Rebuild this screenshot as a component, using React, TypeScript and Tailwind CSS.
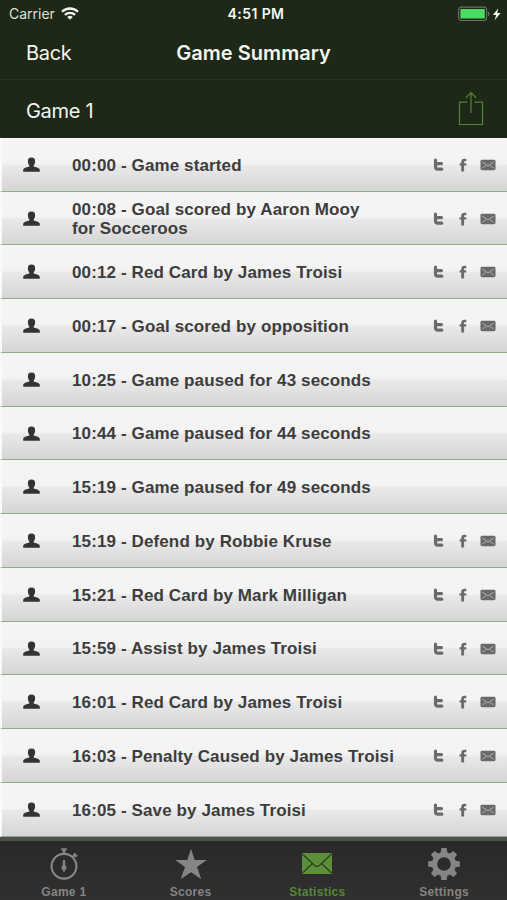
type GameEvent = {
  text: string;
  shareable?: boolean;
};

const events: GameEvent[] = [
  { text: '00:00 - Game started', shareable: true },
  { text: '00:08 - Goal scored by Aaron Mooy\nfor Socceroos', shareable: true },
  { text: '00:12 - Red Card by James Troisi', shareable: true },
  { text: '00:17 - Goal scored by opposition', shareable: true },
  { text: '10:25 - Game paused for 43 seconds' },
  { text: '10:44 - Game paused for 44 seconds' },
  { text: '15:19 - Game paused for 49 seconds' },
  { text: '15:19 - Defend by Robbie Kruse', shareable: true },
  { text: '15:21 - Red Card by Mark Milligan', shareable: true },
  { text: '15:59 - Assist by James Troisi', shareable: true },
  { text: '16:01 - Red Card by James Troisi', shareable: true },
  { text: '16:03 - Penalty Caused by James Troisi', shareable: true },
  { text: '16:05 - Save by James Troisi', shareable: true },
];

const WifiIcon = () => (
  <svg width="18" height="13" viewBox="0 0 18 13" fill="none" stroke="#f4f6f2" strokeWidth="2.3">
    <path d="M1 4.8a11.4 11.4 0 0 1 16 0" />
    <path d="M3.9 7.9a7.2 7.2 0 0 1 10.2 0" />
    <path d="M6.2 10a4 4 0 0 1 5.6 0L9 12.8Z" fill="#f4f6f2" stroke="none" />
  </svg>
);

const BatteryIcon = () => (
  <svg width="44" height="16" viewBox="0 0 44 16">
    <rect x="0.6" y="1.1" width="28" height="13.4" rx="3" fill="none" stroke="#687064" strokeWidth="1.2" />
    <rect x="2.4" y="3" width="24.4" height="9.6" rx="1" fill="#4cdb62" />
    <path d="M30 5.5c2 .8 2 3.9 0 4.7Z" fill="#687064" />
    <path d="M40.2 2.5 34.9 8.9h3.3L36.6 14.2l6-7.2h-3.4Z" fill="#f4f6f2" />
  </svg>
);

const ShareIcon = () => (
  <svg width="26" height="35" viewBox="0 0 26 35" fill="none" stroke="#55813b" strokeWidth="1.2">
    <path d="M9.5 11.1H1.5V33.5H24.5V11.1H16.5" />
    <path d="M13 22V2M7.8 7 13 1.7 18.2 7" />
  </svg>
);

const PersonIcon = () => (
  <svg width="18" height="16" viewBox="0 0 18 16" fill="#333">
    <path d="M8.5.6c2.6 0 3.7 1.4 3.6 3.6 0 1.9-.5 3.1-1.4 4.2v1.2c1.5 1 5.8.8 6.1 3.4v1.7H.2V13c.3-2.6 4.6-2.4 6.1-3.4V8.4C5.4 7.3 4.9 6.1 4.9 4.2 4.8 2 5.9.6 8.5.6Z" />
  </svg>
);

const TwitterIcon = () => (
  <svg width="11" height="14" viewBox="0 0 11 14" fill="none" stroke="#6b6b6b" strokeWidth="3.2" strokeLinecap="round" strokeLinejoin="round">
    <path d="M2.5 2.2v6.5q0 2.5 2.5 2.5h3.8M2.5 5.6h6" />
  </svg>
);

const FacebookIcon = () => (
  <svg width="8" height="14" viewBox="0 0 8 14" fill="#6b6b6b">
    <path d="M7.3.8V3.3H6C5.2 3.3 5.1 3.7 5.1 4.3v.9h2.2v2.3H5.1v6H2.2v-6H.6V5.2h1.6V4c0-2.1 1.2-3.3 3.3-3.3Z" />
  </svg>
);

const MailIcon = () => (
  <svg width="16" height="12" viewBox="0 0 16 12">
    <rect x=".5" y=".8" width="15" height="10.4" rx="1.4" fill="#696969" />
    <path d="m2.3 3 5.7 4L13.7 3M2.5 9.2l3.2-2.6M13.5 9.2l-3.2-2.6" fill="none" stroke="#b4b4b4" strokeWidth="1" />
  </svg>
);

const StopwatchIcon = () => (
  <svg width="30" height="34" viewBox="0 0 30 34" fill="none" stroke="#858585">
    <circle cx="15" cy="19.3" r="12.4" strokeWidth="2.2" />
    <path d="M15 2v5" strokeWidth="2.6" />
    <path d="M12.3 2.3h5.4" strokeWidth="2.2" />
    <path d="m23.3 10.5 3-3.2" strokeWidth="2" />
    <path d="M24.7 6.7 27.8 9.6" strokeWidth="2.6" />
    <path d="M13.9 13h2.2l.3 5.7c1.8 1.5 1.2 3.7-.4 4.2v1.5h-2v-1.5c-1.6-.5-2.2-2.7-.4-4.2Z" fill="#858585" stroke="none" />
  </svg>
);

const StarIcon = () => (
  <svg width="32" height="32" viewBox="0 0 32 32" fill="#858585">
    <path d="m16 .8 3.7 11.3h12L22 19.1l4.2 12L16 24.2 5.8 31.1 10 19.1.3 12.1h12Z" />
  </svg>
);

const StatisticsIcon = () => (
  <svg width="30" height="21" viewBox="0 0 30 21">
    <rect width="30" height="21" rx="1" fill="#5c9038" />
    <path d="m.5 1 11.8 11.2q2.7 2.4 5.4 0L29.5 1M.5 20 10.4 10.5M29.5 20 19.6 10.5" fill="none" stroke="#2b3e22" strokeWidth="1.2" />
  </svg>
);

const GearIcon = () => (
  <svg width="32" height="32" viewBox="-16 -16 32 32">
    <g fill="#858585">
      {[0, 45, 90, 135, 180, 225, 270, 315].map((angle) => (
        <path key={angle} d="M-3.6-10-2.6-15.9h5.2L3.6-10Z" transform={`rotate(${angle})`} />
      ))}
    </g>
    <circle r="9.4" fill="none" stroke="#858585" strokeWidth="5.2" />
  </svg>
);

const tabs = [
  { label: 'Game 1', icon: <StopwatchIcon /> },
  { label: 'Scores', icon: <StarIcon /> },
  { label: 'Statistics', icon: <StatisticsIcon />, active: true },
  { label: 'Settings', icon: <GearIcon /> },
];

const EventRow = ({ event }: { event: GameEvent }) => (
  <li className="flex h-[53.75px] items-center border-b border-l-2 border-b-[#93aa8e] border-l-[#fafafa] bg-[linear-gradient(#f5f5f5_0%,#f3f3f3_48%,#e9e9e9_52%,#d5d5d5_100%)] pt-px pr-[11px] pl-[21px]">
    <div className="w-[49px] shrink-0">
      <PersonIcon />
    </div>
    <p className="shrink-0 pt-px text-[17px] leading-[19.5px] font-bold tracking-[0.12px] whitespace-pre-line text-[#3d3d3d]">
      {event.text}
    </p>
    {event.shareable && (
      <div className="ml-auto flex items-center">
        <TwitterIcon />
        <span className="mr-[13px] ml-[15px]">
          <FacebookIcon />
        </span>
        <MailIcon />
      </div>
    )}
  </li>
);

const App = () => {
  return (
    <div className="flex h-[900px] w-[507px] flex-col overflow-hidden bg-[#1d2817] font-['Liberation_Sans',Arial,sans-serif]">
      <header className="shrink-0 font-[Inter,sans-serif] text-[#f4f6f2]">
        <div className="grid h-[27px] grid-cols-3 items-center pr-[5px] pl-[9px] text-[14px]">
          <div className="flex items-center gap-[6px] text-[#dce0d9]">
            <span>Carrier</span>
            <WifiIcon />
          </div>
          <span className="pl-px text-center font-semibold tracking-[0.4px]">4:51 PM</span>
          <div className="flex justify-end">
            <BatteryIcon />
          </div>
        </div>
        <div className="grid h-[53px] grid-cols-[1fr_auto_1fr] items-center border-b border-[#263320] px-[26px]">
          <span className="text-[20px] tracking-[-0.3px]">Back</span>
          <h1 className="text-[20px] font-semibold tracking-[0.05px]">Game Summary</h1>
        </div>
        <div className="flex h-[57.9px] items-center justify-between pr-[23px] pb-px pl-[26px]">
          <h2 className="pt-[5px] text-[20px] tracking-[-0.3px]">Game 1</h2>
          <ShareIcon />
        </div>
      </header>

      <ul className="shrink-0">
        {events.map((event) => (
          <EventRow key={event.text} event={event} />
        ))}
      </ul>

      <nav className="grid flex-1 grid-cols-4 border-t-4 border-[#4c5249] bg-linear-to-b from-[#292929] to-[#303030]">
        {tabs.map((tab) => (
          <div key={tab.label} className={`flex flex-col items-center pt-[5px] pl-px ${tab.active ? 'text-[#568735]' : 'text-[#858585]'}`}>
            <div className="flex h-[36px] items-center">{tab.icon}</div>
            <span className="pt-px text-[12px] leading-[18px] font-bold tracking-[0.3px]">{tab.label}</span>
          </div>
        ))}
      </nav>
    </div>
  );
};

export default App;
